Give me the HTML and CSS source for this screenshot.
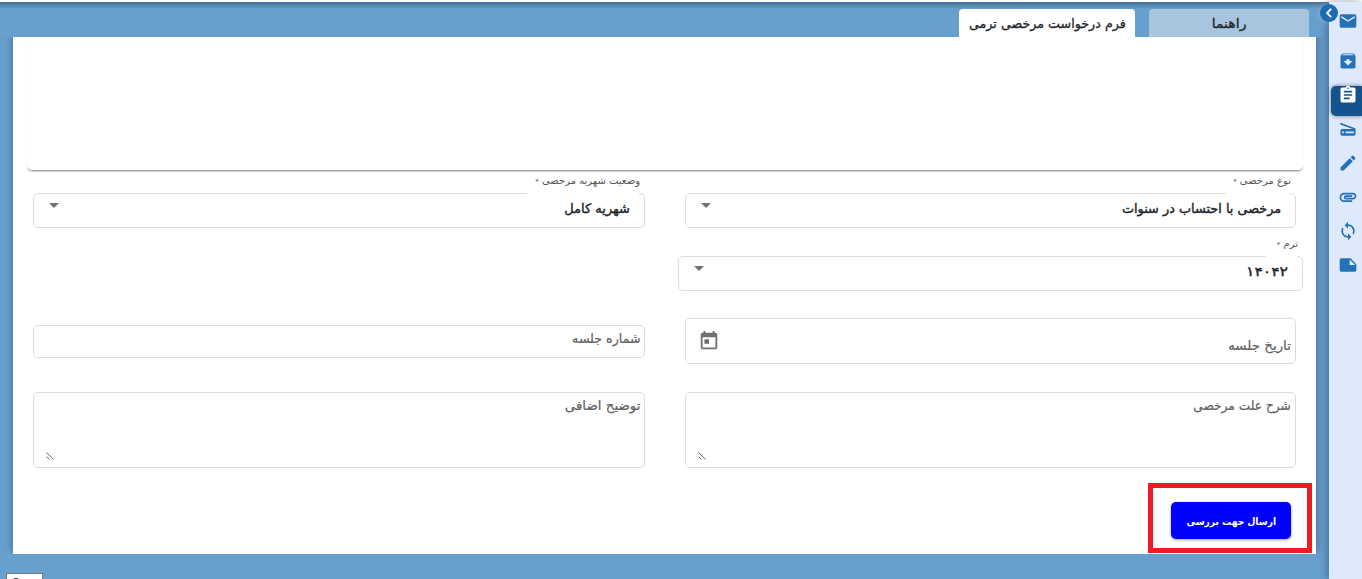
FILE: index.html
```html
<!DOCTYPE html>
<html lang="fa" dir="rtl">
<head>
<meta charset="utf-8">
<title>فرم درخواست مرخصی ترمی</title>
<link rel="stylesheet" href="styles.css">
</head>
<body>
<div class="app">
  <aside class="sidebar">
    <button class="collapse" aria-label="بستن"><svg viewBox="0 0 24 24"><path d="M15.4 7.4 14 6l-6 6 6 6 1.4-1.4L10.8 12z"/></svg></button>
    <nav class="rail">
      <a class="rail-item mail"><svg viewBox="0 0 24 24"><path d="M20 4H4c-1.1 0-2 .9-2 2v12c0 1.1.9 2 2 2h16c1.1 0 2-.9 2-2V6c0-1.100-.9-2-2-2zm0 4-8 5-8-5V6l8 5 8-5v2z"/></svg></a>
      <a class="rail-item archive"><svg viewBox="0 0 24 24"><path d="M20.500 5.200 19.200 3.500C18.900 3.200 18.500 3 18 3H6c-.5 0-.9.2-1.200.6L3.500 5.200C3.200 5.600 3 6 3 6.500V19c0 1.100.9 2 2 2h14c1.100 0 2-.9 2-2V6.500c0-.5-.2-.9-.5-1.300zM12 17.500 6.500 12H10v-2h4v2h3.500L12 17.500zM5.100 5l.8-1h12l.9 1H5.100z"/></svg></a>
      <a class="rail-item active"><svg viewBox="0 0 24 24"><path d="M19 3h-4.200C14.400 1.800 13.300 1 12 1s-2.400.8-2.800 2H5c-1.100 0-2 .9-2 2v14c0 1.100.9 2 2 2h14c1.100 0 2-.9 2-2V5c0-1.100-.9-2-2-2zm-7 0c.6 0 1 .4 1 1s-.4 1-1 1-1-.4-1-1 .4-1 1-1zm2 14H7v-2h7v2zm3-4H7v-2h10v2zm0-4H7V7h10v2z"/></svg></a>
      <a class="rail-item scanner"><svg viewBox="0 0 24 24"><path d="M19.800 10.700 3.200 4.600l-.7 1.900L17.600 12H5c-1.100 0-2 .9-2 2v4c0 1.100.9 2 2 2h14c1.100 0 2-.9 2-2v-5.500c0-.8-.5-1.600-1.200-1.800zM7 17H5v-2h2v2zm12 0H9v-2h10v2z"/></svg></a>
      <a class="rail-item pencil"><svg viewBox="0 0 24 24"><path d="M3 17.250V21h3.750L17.810 9.940l-3.750-3.750L3 17.250zM20.710 7.040a1 1 0 0 0 0-1.410l-2.340-2.340a1 1 0 0 0-1.410 0l-1.830 1.830 3.750 3.750 1.830-1.830z"/></svg></a>
      <a class="rail-item clip"><svg viewBox="0 0 24 24"><path d="M2 12.500C2 9.460 4.460 7 7.500 7H18c2.210 0 4 1.790 4 4s-1.790 4-4 4H9.500a2.500 2.500 0 0 1 0-5H17v2H9.410c-.55 0-.55 1 0 1H18a2 2 0 0 0 0-4H7.500a3.500 3.500 0 0 0 0 7H17v2H7.500C4.460 18 2 15.540 2 12.500z"/></svg></a>
      <a class="rail-item sync"><svg viewBox="0 0 24 24"><path d="M12 4V1L8 5l4 4V6c3.310 0 6 2.690 6 6 0 1.010-.25 1.970-.7 2.800l1.460 1.460A7.930 7.930 0 0 0 20 12c0-4.420-3.580-8-8-8zm0 14c-3.310 0-6-2.690-6-6 0-1.010.25-1.970.7-2.800L5.240 7.740A7.930 7.930 0 0 0 4 12c0 4.420 3.580 8 8 8v3l4-4-4-4v3z"/></svg></a>
      <a class="rail-item note"><svg viewBox="0 0 24 24"><path d="M15 4H4c-1.100 0-2 .9-2 2v12c0 1.100.9 2 2 2h16c1.100 0 2-.9 2-2v-7l-7-7zm-1 8V5.500l6.500 6.500H14z"/></svg></a>
    </nav>
  </aside>
  <main class="content">
    <div class="tabs">
      <div class="tab tab-help"><span>راهنما</span></div>
      <div class="tab tab-form"><span>فرم درخواست مرخصی ترمی</span></div>
    </div>
    <section class="panel">
      <div class="info-card"></div>
      <div class="row row-select">
        <div class="field">
          <label class="label l-type">نوع مرخصی <span class="star">*</span></label>
          <div class="box select"><i class="notch n-type"></i><span class="value v-type">مرخصی با احتساب در سنوات</span><b class="caret"></b></div>
        </div>
        <div class="field">
          <label class="label l-fee">وضعیت شهریه مرخصی <span class="star">*</span></label>
          <div class="box select"><i class="notch n-fee"></i><span class="value v-fee">شهریه کامل</span><b class="caret"></b></div>
        </div>
      </div>
      <div class="field term">
        <label class="label l-term">ترم <span class="star">*</span></label>
        <div class="box select"><i class="notch n-term"></i><span class="value v-term">۱۴۰۴۲</span><b class="caret"></b></div>
      </div>
      <div class="row row-session">
        <div class="box date"><span class="hint h-date">تاریخ جلسه</span><svg viewBox="0 0 24 24"><path d="M19 3h-1V1h-2v2H8V1H6v2H5c-1.110 0-2 .9-2 2v14c0 1.100.89 2 2 2h14c1.100 0 2-.9 2-2V5c0-1.100-.9-2-2-2zm0 16H5V8h14v11zM7 10h5v5H7z"/></svg></div>
        <div class="box number"><span class="hint h-number">شماره جلسه</span></div>
      </div>
      <div class="row row-text">
        <div class="box area"><span class="hint h-reason">شرح علت مرخصی</span><svg class="grip" viewBox="0 0 8 8"><path d="M.5.5l7 7M.5 4.500l3 3"/></svg></div>
        <div class="box area"><span class="hint h-extra">توضیح اضافی</span><svg class="grip" viewBox="0 0 8 8"><path d="M.5.5l7 7M.5 4.500l3 3"/></svg></div>
      </div>
      <button class="submit"><span>ارسال جهت بررسی</span></button>
      <div class="highlight"></div>
    </section>
  </main>
  <div class="status"></div>
</div>
</body>
</html>
```

FILE: styles.css
```css
* { box-sizing: border-box; }
body { margin: 0; font-family: "DejaVu Sans", "Noto Sans", sans-serif; color: #212529; overflow: hidden; }
.app { position: relative; display: flex; height: 579px; border-top: 2px solid #fdfdfd; background: #68a0cd; }
.sidebar { position: relative; z-index: 1; width: 33px; flex: none; background: #dfe9fc; box-shadow: -2px 0 8px rgba(30,55,85,.45); }
.collapse { position: absolute; left: -9px; top: 2px; width: 18px; height: 18px; padding: 0; border: 0; border-radius: 50%; background: #1c6ab1; box-shadow: 0 0 6px rgba(223,233,252,.4); }
.collapse svg { display: block; width: 18px; height: 18px; fill: #fff; stroke: #fff; stroke-width: .8; }
.rail { display: flex; flex-direction: column; }
.rail-item { display: flex; align-items: center; justify-content: center; height: 34px; padding-right: 5px; padding-left: 10px; }
.rail-item svg { width: 20px; height: 20px; fill: #2471b7; flex: none; }
.mail { height: 38px; }
.archive { height: 42px; }
.active { align-items: flex-start; height: 30px; margin: 4px 0 -4px 2px; padding-left: 8px; border-radius: 0 5px 5px 0; border-radius: 5px 0 0 5px; background: #13548f; box-shadow: 0 0 4px rgba(0,0,0,.5); }
.active svg { margin-top: -1px; fill: #fff; }
.content { flex: 1; padding: 7px 13px 0; background: linear-gradient(rgba(40,70,100,.55), rgba(40,70,100,0) 7px); }
.tabs { display: flex; gap: 14px; height: 28px; padding-right: 7px; }
.tab { display: flex; align-items: center; justify-content: center; border-radius: 4px 4px 0 0; font-size: 13px; white-space: nowrap; -webkit-text-stroke: .3px; }
.tab-help { width: 160px; background: #a7c5df; }
.tab-help span { transform: scaleX(1.08); }
.tab-form { width: 176px; background: #fff; }
.tab-form span { transform: scaleX(.975); }
.panel { position: relative; height: 517px; padding: 0 13px 0 14px; background: #fff; box-shadow: 0 -3px 9px rgba(30,55,85,.55); clip-path: inset(0 -13px 0 -13px); }
.info-card { height: 134px; border-radius: 0 0 5px 5px; border-bottom: 1px solid #aaa; box-shadow: 0 1px 1px rgba(0,0,0,.2); }
.row { display: grid; grid-template-columns: 611px 612px; column-gap: 40px; padding: 0 7px 0 6px; }
.label { display: block; height: 22px; padding: 0 5px; font-size: 10px; line-height: 20px; color: #555; white-space: nowrap; }
.star { font-size: 7px; }
.box { position: relative; border: 1px solid #dcdcdc; border-radius: 5px; background: #fff; }
.select { display: flex; justify-content: space-between; height: 35px; padding: 0 14px 0 15px; }
.value { font-size: 13px; line-height: 29px; white-space: nowrap; transform-origin: right; -webkit-text-stroke: .4px; }
.v-type { transform: scaleX(.988); }
.v-term { transform: scaleX(1.2); }
.caret { width: 10px; height: 5px; margin-top: 9px; background: #707070; clip-path: polygon(0 0, 100% 0, 50% 100%); }
.notch { position: absolute; top: -1px; right: 5px; height: 1px; background: #fff; }
.n-type { width: 64px; }
.n-fee { width: 112px; }
.n-term { width: 31px; }
.term { width: 625px; margin-top: 6px; }
.row-session { margin-top: 27px; align-items: center; }
.hint { font-size: 13px; line-height: 20px; color: #606060; white-space: nowrap; transform-origin: right; -webkit-text-stroke: .2px; }
.h-date { transform: scaleX(1.03); }
.h-number { transform: scaleX(.97); }
.h-reason { transform: scaleX(.94); }
.h-extra { transform: scaleX(1.03); }
.date { display: flex; justify-content: space-between; height: 46px; padding: 17px 4px 0 12px; }
.date svg { width: 22px; height: 22px; margin-top: -6px; fill: #707070; }
.number { height: 33px; padding: 3px 4px; }
.number .hint, .area .hint { display: block; width: max-content; }
.row-text { margin-top: 28px; }
.area { height: 76px; padding: 3px 4px; }
.grip { position: absolute; left: 12px; bottom: 7px; width: 8px; height: 8px; stroke: #555; stroke-width: .9; fill: none; }
.submit { display: block; width: 120px; height: 37px; margin: 34px 12px 0 0; padding: 2px 0 0; border: 0; border-radius: 5px; background: #0000fe; color: #fff; font: bold 10px "DejaVu Sans", sans-serif; box-shadow: 0 1px 3px rgba(0,0,0,.4); white-space: nowrap; }
.submit span { display: inline-block; transform: scaleX(.91); }
.highlight { position: absolute; right: 4px; top: 446px; width: 164px; height: 70px; border: 5px solid #ec1c24; }
.status { position: absolute; left: 6px; bottom: 0; width: 37px; height: 6px; border: 1px solid #777; border-bottom: 0; background: #fff; }
.status::after { content: ""; position: absolute; left: 7px; bottom: 0; width: 4px; height: 1px; background: #555; }
```
